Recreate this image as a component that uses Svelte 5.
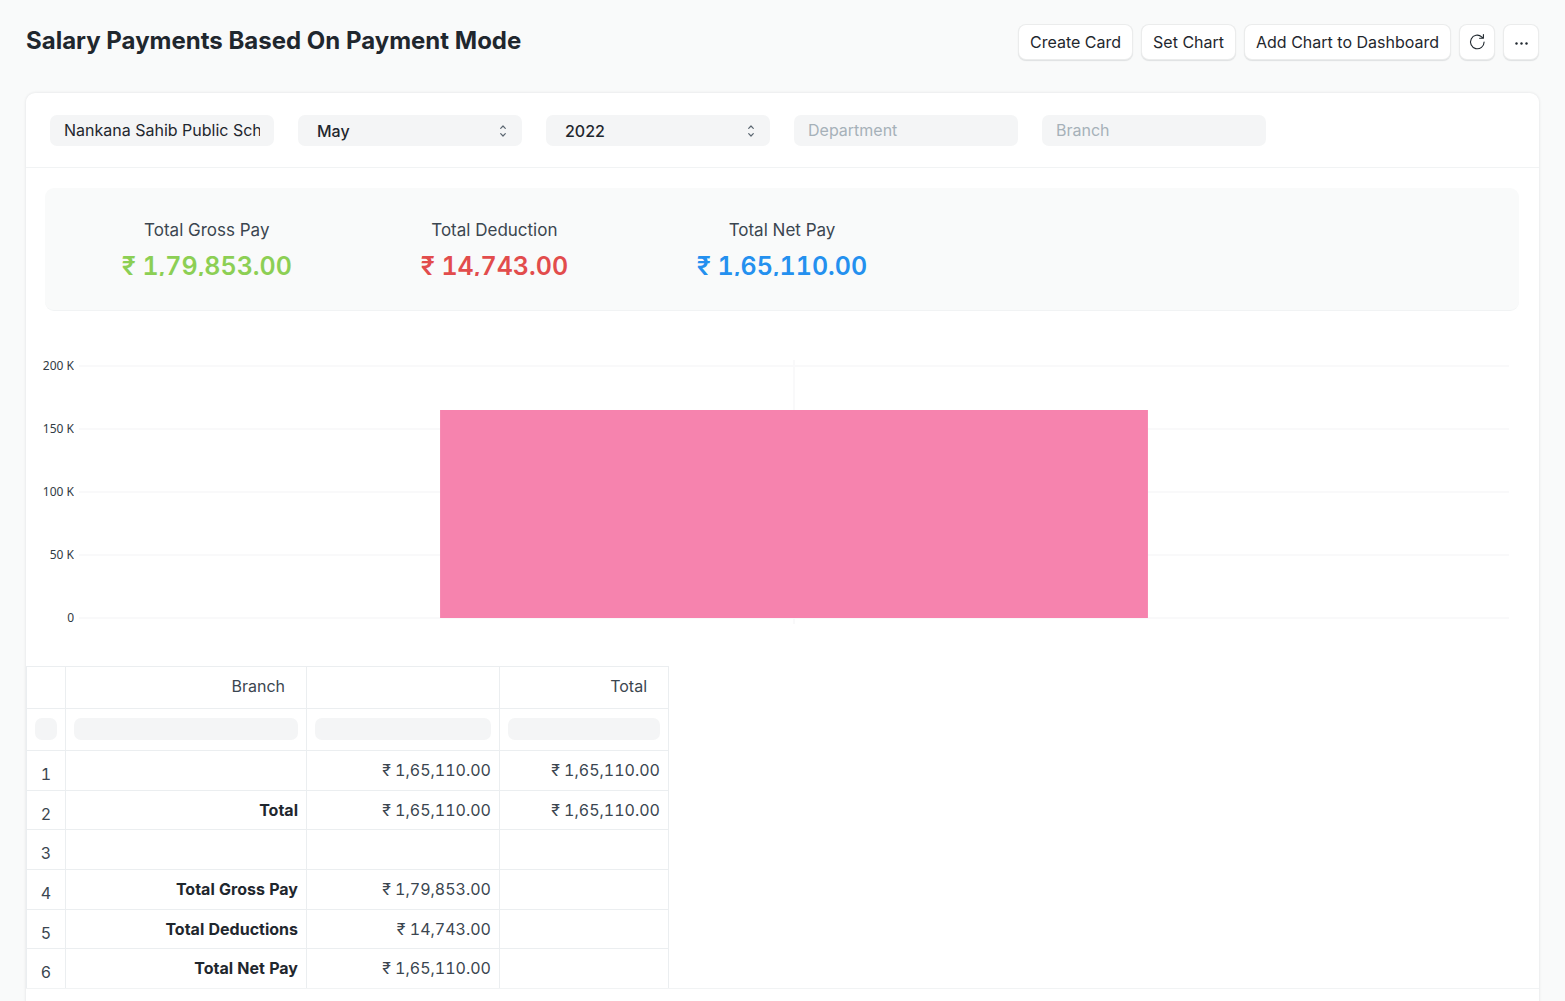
<script>
  const months = ['January', 'February', 'March', 'April', 'May', 'June', 'July', 'August', 'September', 'October', 'November', 'December'];
  const years = ['2022', '2021', '2020'];
  let company = $state('Nankana Sahib Public School');
  let month = $state('May');
  let year = $state('2022');

  const summary = [
    { label: 'Total Gross Pay', value: '₹ 1,79,853.00', tone: 'green' },
    { label: 'Total Deduction', value: '₹ 14,743.00', tone: 'red' },
    { label: 'Total Net Pay', value: '₹ 1,65,110.00', tone: 'blue' }
  ];

  const ticks = [
    { label: '200 K', y: 6 },
    { label: '150 K', y: 69 },
    { label: '100 K', y: 132 },
    { label: '50 K', y: 195 },
    { label: '0', y: 258 }
  ];

  const columns = ['Branch', '', 'Total'];
  const rows = [
    ['', '₹ 1,65,110.00', '₹ 1,65,110.00'],
    ['Total', '₹ 1,65,110.00', '₹ 1,65,110.00'],
    ['', '', ''],
    ['Total Gross Pay', '₹ 1,79,853.00', ''],
    ['Total Deductions', '₹ 14,743.00', ''],
    ['Total Net Pay', '₹ 1,65,110.00', '']
  ];
</script>

{#snippet chevrons()}
  <svg class="chevrons" width="8" height="14" viewBox="0 0 8 14" fill="none" stroke="#5a6570" stroke-width="1.2" stroke-linecap="round" stroke-linejoin="round" aria-hidden="true">
    <path d="M1.7 4.3 4 2l2.3 2.3M1.7 9.7 4 12l2.3-2.3" />
  </svg>
{/snippet}

<div class="page">
  <header>
    <h1>Salary Payments Based On Payment Mode</h1>
    <div class="actions">
      <button type="button">Create Card</button>
      <button type="button">Set Chart</button>
      <button type="button">Add Chart to Dashboard</button>
      <button type="button" class="icon" aria-label="Refresh">
        <svg width="18" height="18" viewBox="0 0 18 18" fill="none" stroke="#1f272e" stroke-width="1.1" stroke-linecap="round" stroke-linejoin="round">
          <path d="M16.1 9A6.8 6.8 0 1 1 13.7 3.8L15 5.1M15.4 1.5V5.3H11.6" />
        </svg>
      </button>
      <button type="button" class="icon" aria-label="Menu">
        <svg width="18" height="18" viewBox="0 0 18 18" fill="#1f272e">
          <circle cx="4.5" cy="10.5" r="1.2" /><circle cx="9.5" cy="10.5" r="1.2" /><circle cx="14.5" cy="10.5" r="1.2" />
        </svg>
      </button>
    </div>
  </header>

  <main>
    <form class="filters">
      <input type="text" aria-label="Company" bind:value={company} />
      <div class="select">
        <select aria-label="Month" bind:value={month}>
          {#each months as m}<option>{m}</option>{/each}
        </select>
        {@render chevrons()}
      </div>
      <div class="select">
        <select aria-label="Year" bind:value={year}>
          {#each years as y}<option>{y}</option>{/each}
        </select>
        {@render chevrons()}
      </div>
      <input type="text" aria-label="Department" placeholder="Department" />
      <input type="text" aria-label="Branch" placeholder="Branch" />
    </form>

    <section class="summary">
      {#each summary as item}
        <div class="item">
          <div class="label">{item.label}</div>
          <div class="value {item.tone}">{item.value}</div>
        </div>
      {/each}
    </section>

    <section class="chart" aria-label="Net pay chart">
      <svg class="axis" width="48" height="270">
        {#each ticks as t}
          <text x="48" y={t.y + 4} text-anchor="end">{t.label}</text>
        {/each}
      </svg>
      <svg class="plot" height="270">
        {#each ticks as t}
          <line x1="0" x2="100%" y1={t.y} y2={t.y} />
        {/each}
        <line x1="50%" x2="50%" y1="0" y2="264" />
        <rect x="25.25%" y="50" width="49.5%" height="208" />
      </svg>
    </section>

    <table>
      <colgroup><col class="c0" /><col class="c1" /><col class="c2" /><col class="c3" /></colgroup>
      <thead>
        <tr>
          <th></th>
          {#each columns as c}<th>{c}</th>{/each}
        </tr>
        <tr class="filter-row">
          <td><input type="text" aria-label="Filter row number" /></td>
          {#each columns as c, i}
            <td><input type="text" aria-label="Filter column {i + 1}" /></td>
          {/each}
        </tr>
      </thead>
      <tbody>
        {#each rows as row, i}
          <tr>
            <td class="num">{i + 1}</td>
            <td class="name">{row[0]}</td>
            <td>{row[1]}</td>
            <td>{row[2]}</td>
          </tr>
        {/each}
      </tbody>
    </table>
    <footer></footer>
  </main>
</div>

<style>
  :global(body) {
    background: #f9fafa;
    overflow: hidden;
  }
  .page {
    padding: 24px 26px 0;
    font: 400 16px/24px Inter, "Noto Sans", sans-serif;
    color: #1f272e;
  }
  * {
    box-sizing: border-box;
  }
  header {
    display: flex;
    justify-content: space-between;
    align-items: flex-start;
    height: 69px;
  }
  h1 {
    margin: 0;
    font-size: 24px;
    line-height: 34px;
    font-weight: 700;
  }
  .actions {
    display: flex;
    gap: 8px;
  }
  button {
    height: 36px;
    padding: 0 12px;
    border: 0;
    border-radius: 8px;
    background: #fff;
    color: #1f272e;
    font: inherit;
    box-shadow: 0 0 0 1px rgba(31, 39, 46, 0.09) inset, 0 1px 1px rgba(31, 39, 46, 0.12);
  }
  .icon {
    display: flex;
    align-items: center;
    justify-content: center;
    width: 36px;
    padding: 0;
  }
  main {
    background: #fff;
    border-radius: 9px 9px 0 0;
    box-shadow: 0 0 3px rgba(31, 39, 46, 0.12);
  }
  .filters {
    display: flex;
    flex-wrap: wrap;
    gap: 24px;
    padding: 22px 24px 21px;
    border-bottom: 1px solid #f1f3f4;
  }
  .filters input,
  select {
    display: block;
    width: 224px;
    height: 31px;
    padding: 0 14px 2px;
    border: 0;
    border-radius: 7px;
    background: #f4f5f6;
    color: #1f272e;
    font: inherit;
    font-weight: 500;
    outline: 0;
  }
  .filters input {
    font-weight: 400;
  }
  .filters input::placeholder {
    color: #a6b1b9;
    opacity: 1;
  }
  .select {
    position: relative;
  }
  select {
    appearance: none;
    padding: 1px 19px 0;
  }
  .chevrons {
    position: absolute;
    right: 15px;
    top: 9px;
    pointer-events: none;
  }
  .summary {
    display: grid;
    grid-template-columns: repeat(5, 1fr);
    margin: 20px 20px 0 19px;
    padding: 30px 18px 34px;
    border-radius: 9px;
    background: #f9fafa;
    border-bottom: 1px solid #f1f3f4;
    text-align: center;
  }
  .label {
    font-size: 17px;
    line-height: 24px;
    color: #3b4650;
  }
  .value {
    margin-top: 10px;
    height: 24px;
    overflow: hidden;
    font-size: 25px;
    line-height: 28px;
    font-weight: 600;
    font-variant-numeric: tabular-nums;
  }
  .green { color: #8ccf54; }
  .red { color: #e24c4c; }
  .blue { color: #2490ef; }
  .chart {
    display: flex;
    gap: 5px;
    padding: 49px 30px 36px 0;
  }
  .axis {
    flex: none;
  }
  .axis text {
    font: 400 12px "Noto Sans", sans-serif;
    fill: #313b44;
  }
  .plot {
    flex: 1;
    min-width: 0;
  }
  .plot line {
    stroke: #f9f9fa;
    stroke-width: 2;
  }
  .plot rect {
    fill: #f683ae;
  }
  table {
    table-layout: fixed;
    width: 643px;
    border-collapse: separate;
    border-spacing: 0;
    border-top: 1px solid #ebeef0;
    color: #3b4650;
    text-align: right;
    font-variant-numeric: tabular-nums;
  }
  .c0 { width: 40px; }
  .c1 { width: 241px; }
  .c2 { width: 193px; }
  .c3 { width: 169px; }
  th,
  td {
    height: 40px;
    padding: 0 8px 1px;
    border-right: 1px solid #ebeef0;
    border-bottom: 1px solid #ebeef0;
  }
  th:first-child,
  td:first-child {
    border-left: 1px solid #ebeef0;
  }
  th {
    height: 42px;
    padding: 0 21px 3px;
    font-weight: 400;
  }
  .filter-row td {
    height: 42px;
    padding-bottom: 2px;
  }
  .filter-row input {
    display: block;
    width: 100%;
    height: 22px;
    padding: 0 6px;
    border: 0;
    border-radius: 7px;
    background: #f4f5f6;
    font: inherit;
  }
  tbody tr:nth-child(3n + 2) td {
    height: 39px;
  }
  .num {
    padding-top: 8px;
    text-align: center;
  }
  .name {
    font-weight: 700;
    color: #1f272e;
  }
  tbody tr:last-child td {
    height: 39px;
    border-bottom: 0;
  }
  footer {
    height: 32px;
    border-top: 1px solid #f1f3f4;
  }
</style>
